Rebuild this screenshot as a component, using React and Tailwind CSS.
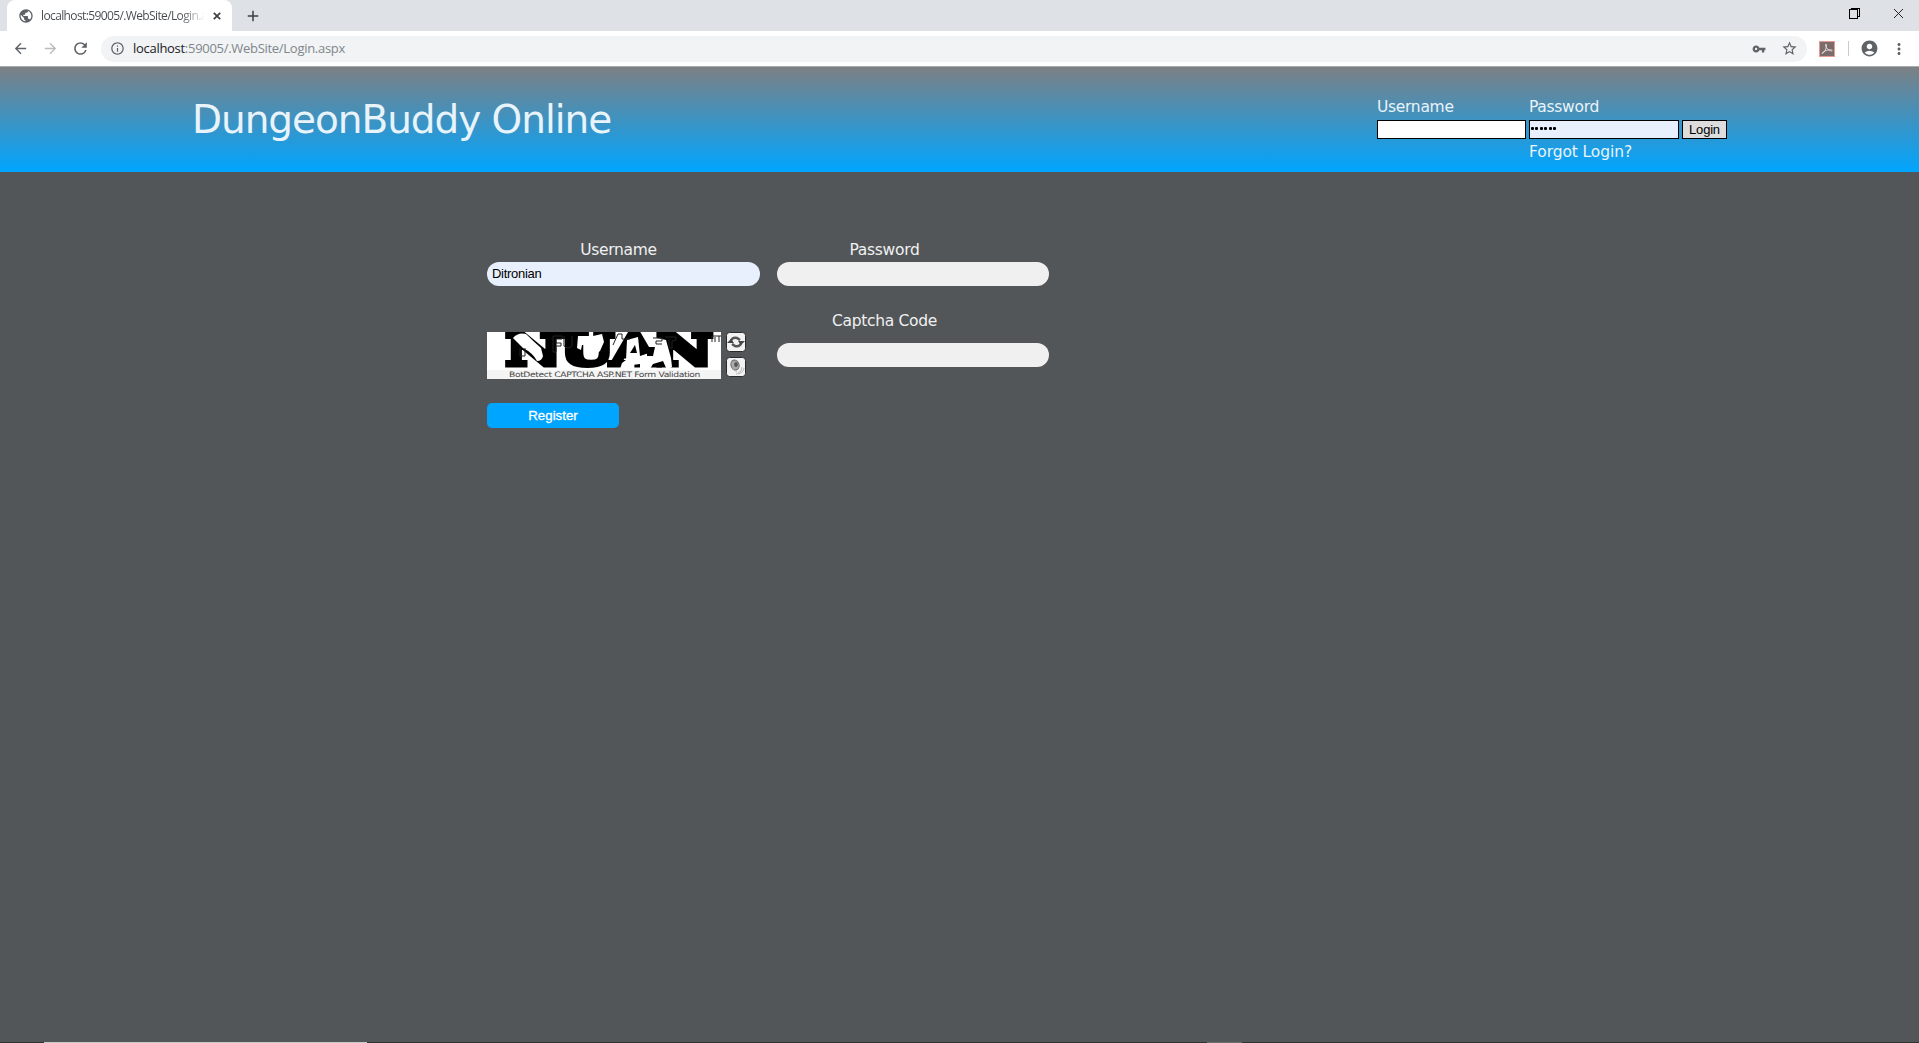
import React from "react";
import {
  MdPublic, MdArrowBack, MdArrowForward, MdRefresh, MdInfoOutline, MdVpnKey,
  MdStarBorder, MdAccountCircle, MdMoreVert, MdAdd,
} from "react-icons/md";

function TabStrip() {
  return (
    <div className="flex h-[31px] bg-[#dee1e6]">
      <div className="ml-[7px] flex h-full w-[225px] items-center rounded-t-lg bg-white pl-[11px]">
        <MdPublic className="size-4 shrink-0 text-[#5f6368]" />
        <div className="ml-[7px] w-[164px] overflow-hidden whitespace-nowrap bg-linear-to-r from-[#45494d] from-85% to-transparent bg-clip-text font-['Open_Sans',sans-serif] text-[12px] tracking-[-0.62px] text-transparent">
          localhost:59005/.WebSite/Login.aspx
        </div>
        <svg className="ml-[8px] shrink-0" width="8" height="8" viewBox="0 0 8 8" stroke="#3c4043" strokeWidth="1.700">
          <path d="M.8.8l6.400 6.400M7.200.8L.8 7.200" />
        </svg>
      </div>
      <MdAdd className="mt-[7px] ml-[12px] size-[18px] text-[#3c4043]" />
      <div className="mr-[15px] ml-auto flex items-center gap-[33px] pb-[4px]">
        <svg width="11" height="11" viewBox="0 0 11 11" fill="none" stroke="#000" shapeRendering="crispEdges">
          <path d="M.5 1.5h8v9h-8zM1.500 .5h9v8H9" />
        </svg>
        <svg width="11" height="11" viewBox="0 0 11 11" stroke="#222" strokeWidth="1">
          <path d="M1 1l9 9M10 1l-9 9" />
        </svg>
      </div>
    </div>
  );
}

function Toolbar() {
  return (
    <div className="flex h-[36px] items-center border-b border-[#a8abad] bg-white pr-[11px] text-[#5f6368]">
      <MdArrowBack className="ml-[12px] size-[17px]" />
      <MdArrowForward className="ml-[13px] size-[17px] text-[#babcbe]" />
      <MdRefresh className="ml-[12px] size-[19px]" />
      <div className="ml-[11px] flex h-[26px] flex-1 items-center rounded-full bg-[#f1f3f4] pr-[9px] pl-[9px]">
        <MdInfoOutline className="size-[15px]" />
        <div className="ml-[8px] font-['Open_Sans',sans-serif] text-[13px] tracking-[-0.29px] text-[#80868b]">
          <span className="text-[#202124]">localhost</span>:59005/.WebSite/Login.aspx
        </div>
        <MdVpnKey className="ml-auto size-[14px]" />
        <MdStarBorder className="ml-[15px] size-[17px]" />
      </div>
      <svg className="ml-[12px]" width="16" height="16" viewBox="0 0 16 16">
        <rect x=".5" y=".5" width="15" height="15" fill="#7b6b6b" stroke="#e59a94" />
        <path d="M3.5 12.5c2-1.500 4-4.500 4-8.500 0-1.500-1.500-1-1 .5.7 2.500 2.500 5 6 5.500 1.300 0 .5-1.500-1-1.300-3 .2-5.500 1-8 2.800-.8.700-.6 1.400 0 1z" fill="none" stroke="#f0e8e8" strokeWidth=".8" />
      </svg>
      <div className="ml-[13px] h-[15px] w-px bg-[#c8cacd]" />
      <MdAccountCircle className="ml-[11px] size-[19px]" />
      <MdMoreVert className="ml-[11px] size-[18px]" />
    </div>
  );
}

function SiteHeader() {
  return (
    <header className="flex h-[105px] items-start justify-between bg-linear-to-b/srgb from-[#7c8084] to-[#00a5ff] px-[192px] text-[#e8f3fa]">
      <h1 className="mt-[28px] text-[39px] leading-[50px] tracking-[-1.05px] whitespace-nowrap">DungeonBuddy Online</h1>
      <form className="mt-[28px] grid grid-cols-[149px_150px_45px] gap-x-[3px] text-[15.5px] leading-[24px] tracking-[-0.3px]">
        <label className="h-[25px]">Username</label>
        <label>Password</label>
        <span />
        <div className="h-[19px] border border-black bg-white" />
        <div className="flex h-[19px] items-center gap-[1.4px] border border-black bg-[#e8f0fe] pb-[2px] pl-[1px]">
          {[0, 1, 2, 3, 4, 5].map((i) => (
            <i key={i} className="size-[3px] rounded-[1px] bg-black" />
          ))}
        </div>
        <button type="button" className="h-[19px] border border-black bg-[#ddd] text-center font-['Liberation_Sans',sans-serif] text-[13px] leading-[16px] tracking-[-0.2px] text-black">
          Login
        </button>
        <span />
        <a className="col-span-2 leading-[26px] tracking-[-0.1px]">Forgot Login?</a>
      </form>
    </header>
  );
}

function Captcha() {
  return (
    <div className="flex gap-[5px]">
      <svg width="234" height="47" viewBox="0 0 234 47" className="bg-white">
        <text x="19" y="33" textLength="206" lengthAdjust="spacingAndGlyphs" fontFamily="DejaVu Serif" fontWeight="bold" fontSize="43" fill="#000" stroke="#000" strokeWidth="5">
          NUAN
        </text>
        <g fill="#fff">
          <path d="M26 6q5-6 13-4 7 7 15 14l2 8q-1 5-6 5-4-8-14-13z" />
          <path d="M91 4h15l9-2 2 8-4 9q-7 7-16 4l3-10h-5l-1 5-4-2z" />
          <path d="M140 8l11-3 2 19 9-3 4-16 13 3 5 18 1 9-5 3-4-9-10 3-3 5h-10v-5l-8 1-4 4h-8l2-6 4-3z" />
        </g>
        <path d="M143 21l5-8 2 8zM160 15h8l-2 9h-6z" />
        <g fill="none" stroke="#222" strokeWidth="1">
          <path d="M33 16v8h5v-8M66 4h9v3h-6v4h5v3h-5v6h-3zM77 4v10q4 4 8 0V4M126 13l5-11h4v5h8M166 6h9v3h-6v3h6M178 5h11v3l-4 1v7h-3V8M225 10V4h9M228 10V5M232 10V4" />
        </g>
        <rect y="38" width="234" height="9" fill="#f4f4f4" />
        <text x="22" y="44.500" textLength="191" lengthAdjust="spacingAndGlyphs" fontFamily="DejaVu Sans" fontSize="7.500" fill="#444">
          BotDetect CAPTCHA ASP.NET Form Validation
        </text>
      </svg>
      <div className="flex flex-col gap-[5px]">
        <svg width="20" height="20" viewBox="0 0 20 20">
          <rect x=".5" y=".5" width="19" height="19" rx="3" fill="#f2f2f2" stroke="#292b2c" />
          <g fill="none" stroke="#555" strokeWidth="2.500">
            <path d="M5 10q0-5 6-4l3 2M15 10q0 5-6 4l-3-2" />
          </g>
          <path d="M12 9h7l-4 4zM1 11h7L5 7z" fill="#444" />
        </svg>
        <svg width="20" height="20" viewBox="0 0 20 20">
          <rect x=".5" y=".5" width="19" height="19" rx="3" fill="#f2f2f2" stroke="#292b2c" />
          <ellipse cx="9" cy="8" rx="4" ry="5" fill="#aaa" stroke="#666" transform="rotate(-20 9 8)" />
          <ellipse cx="10" cy="7.500" rx="1.800" ry="2.500" fill="#555" />
          <path d="M6 12l5 3M12 16q4-1 4-6M10 17q7 0 8-6" fill="none" stroke="#bbb" />
        </svg>
      </div>
    </div>
  );
}

function RegisterForm() {
  return (
    <form className="mt-[66px] ml-[487px] grid w-[562px] grid-cols-[273px_272px] gap-x-[17px] text-[15.5px] leading-[24px] tracking-[-0.3px] text-[#f0f0f0]">
      <label className="h-[24px] pr-[10px] text-center">Username</label>
      <label className="h-[24px] pr-[57px] text-center">Password</label>
      <div className="h-[24px] rounded-full bg-[#e8f0fe] pl-[5px] font-['Liberation_Sans',sans-serif] text-[13px] leading-[23px] tracking-[-0.3px] text-black">Ditronian</div>
      <div className="h-[24px] rounded-full bg-[#f0f0f0]" />
      <div className="pt-[46px]"><Captcha /></div>
      <div className="pt-[23px]">
        <label className="block pr-[57px] text-center">Captcha Code</label>
        <div className="mt-[10px] h-[24px] rounded-full bg-[#f0f0f0]" />
      </div>
      <button type="button" className="mt-[24px] h-[25px] w-[132px] rounded-[5px] bg-[#00a5ff] font-['Liberation_Sans',sans-serif] text-[13.3px] leading-[24px] tracking-[0px] text-white [-webkit-text-stroke:0.3px_white]">
        Register
      </button>
    </form>
  );
}

export default function App() {
  return (
    <div className="flex h-[1043px] w-[1919px] flex-col overflow-hidden bg-[#525659] font-['DejaVu_Sans',sans-serif]">
      <TabStrip />
      <Toolbar />
      <SiteHeader />
      <RegisterForm />
      <div className="mt-auto flex h-px bg-[#303234]">
        <div className="ml-[44px] w-[323px] bg-[#c8c9c8]" />
        <div className="ml-[840px] w-[35px] bg-[#6c6e70]" />
      </div>
    </div>
  );
}
